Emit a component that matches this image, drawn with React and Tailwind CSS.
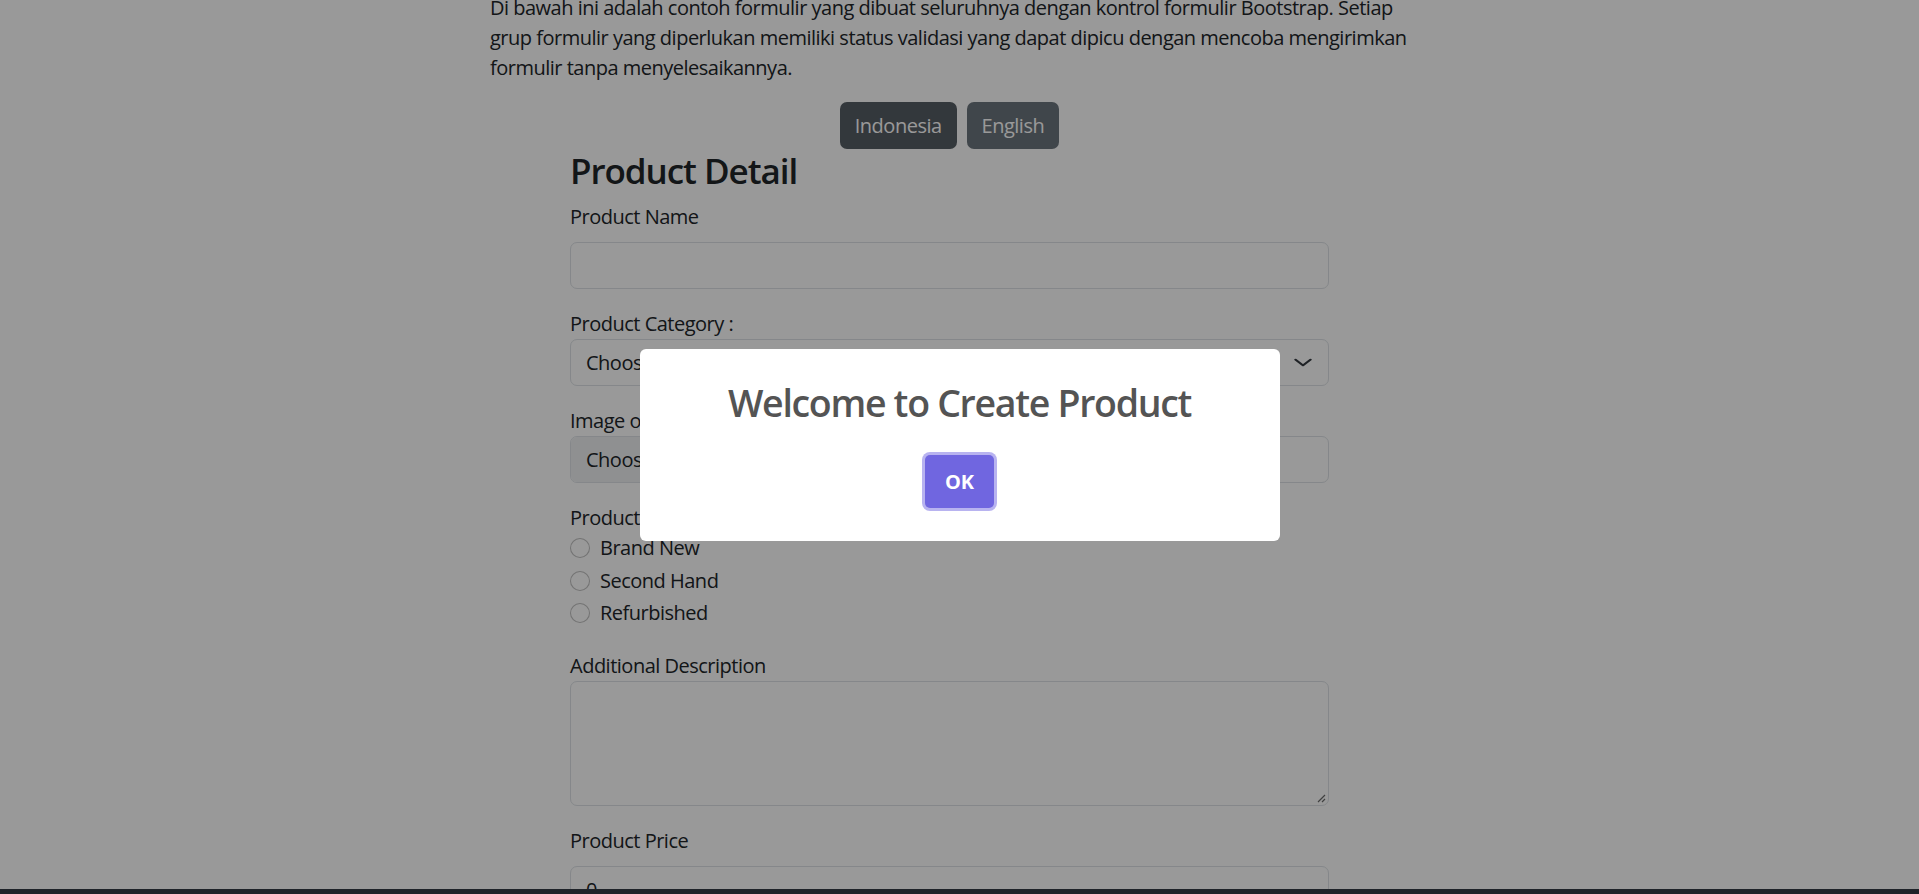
import React from 'react';

const inputCls = 'w-full h-[47px] rounded-[7px] border border-[#dee2e6] bg-white px-[15px] text-[20px] text-[#212529]';

const Radio = ({ label }) => (
  <div className="flex items-center h-[30px] mb-[2.5px]">
    <span className="w-5 h-5 shrink-0 rounded-full border border-black/25 bg-white" />
    <span className="ml-[10px]">{label}</span>
  </div>
);

const App = () => {
  return (
    <div className="relative h-[894px] overflow-hidden bg-white text-[20px] leading-[30px] text-[#212529] font-['Open_Sans',sans-serif] tracking-[-0.025em]">
      <div className="pr-[20px]">
        <div className="w-[919px] mx-auto -mt-[7px]">
          <p className="mb-[19px]">
            <span className="block whitespace-nowrap">Di bawah ini adalah contoh formulir yang dibuat seluruhnya dengan kontrol formulir Bootstrap. Setiap</span>
            <span className="block whitespace-nowrap">grup formulir yang diperlukan memiliki status validasi yang dapat dipicu dengan mencoba mengirimkan</span>
            <span className="block whitespace-nowrap">formulir tanpa menyelesaikannya.</span>
          </p>
          <div className="flex justify-center gap-[10px]">
            <button className="h-[47px] px-[15px] rounded-[7px] bg-[#565e64] text-white">Indonesia</button>
            <button className="h-[47px] px-[15px] rounded-[7px] bg-[#6c757d] text-white">English</button>
          </div>
        </div>

        <div className="w-[759px] mx-auto">
          <h3 className="mt-[1px] mb-[10px] text-[35px] leading-[42px] font-semibold tracking-[-0.03em]">Product Detail</h3>

          <div className="mb-[20px]">
            <label className="block mb-[10px]">Product Name</label>
            <div className={inputCls} />
          </div>

          <div className="mb-[20px]">
            <label className="block">Product Category :</label>
            <div className={`${inputCls} flex items-center justify-between`}>
              <span>Choose...</span>
              <svg width="20" height="15" viewBox="0 0 16 16" preserveAspectRatio="none" fill="none" stroke="#343a40" strokeWidth="2" strokeLinecap="round" strokeLinejoin="round">
                <path d="m2 5 6 6 6-6" />
              </svg>
            </div>
          </div>

          <div className="mb-[20px]">
            <label className="block">Image of Product</label>
            <div className="flex h-[47px] w-full overflow-hidden rounded-[7px] border border-[#dee2e6] bg-white">
              <span className="flex items-center px-[15px] bg-[#eef0f2] border-r border-[#dee2e6]">Choose File</span>
              <span className="flex items-center pl-[15px]">No file chosen</span>
            </div>
          </div>

          <div className="mb-[23px]">
            <label className="block">Product Freshness</label>
            <Radio label="Brand New" />
            <Radio label="Second Hand" />
            <Radio label="Refurbished" />
          </div>

          <div className="mb-[20px]">
            <label className="block">Additional Description</label>
            <div className="relative w-full h-[125px] rounded-[7px] border border-[#dee2e6] bg-white">
              <svg width="9" height="9" viewBox="0 0 9 9" className="absolute right-[2px] bottom-[2px]" stroke="#6b6b6b" strokeWidth="1.2">
                <path d="M1 8 8 1M5 8 8 5" />
              </svg>
            </div>
          </div>

          <div className="mb-[20px]">
            <label className="block mb-[10px]">Product Price</label>
            <div className={`${inputCls} flex items-center`}>0</div>
          </div>
        </div>
      </div>

      <div className="fixed inset-0 bg-black/40 flex items-center justify-center pb-[4px]">
        <div className="w-[640px] h-[192px] rounded-[6px] bg-white flex flex-col items-center pt-[28px]">
          <h2 className="text-[37.5px] leading-[52px] font-semibold tracking-[-0.035em] text-[#545454]">Welcome to Create Product</h2>
          <button className="mt-[26px] w-[69px] h-[53px] rounded-[5px] bg-[#7066e0] text-white text-[20px] font-bold tracking-normal ring-[3px] ring-[#b8b3f0]">OK</button>
        </div>
      </div>

      <div className="absolute left-0 right-0 bottom-0 h-[5px] bg-[#1f2329]" />
    </div>
  );
};

export default App;
